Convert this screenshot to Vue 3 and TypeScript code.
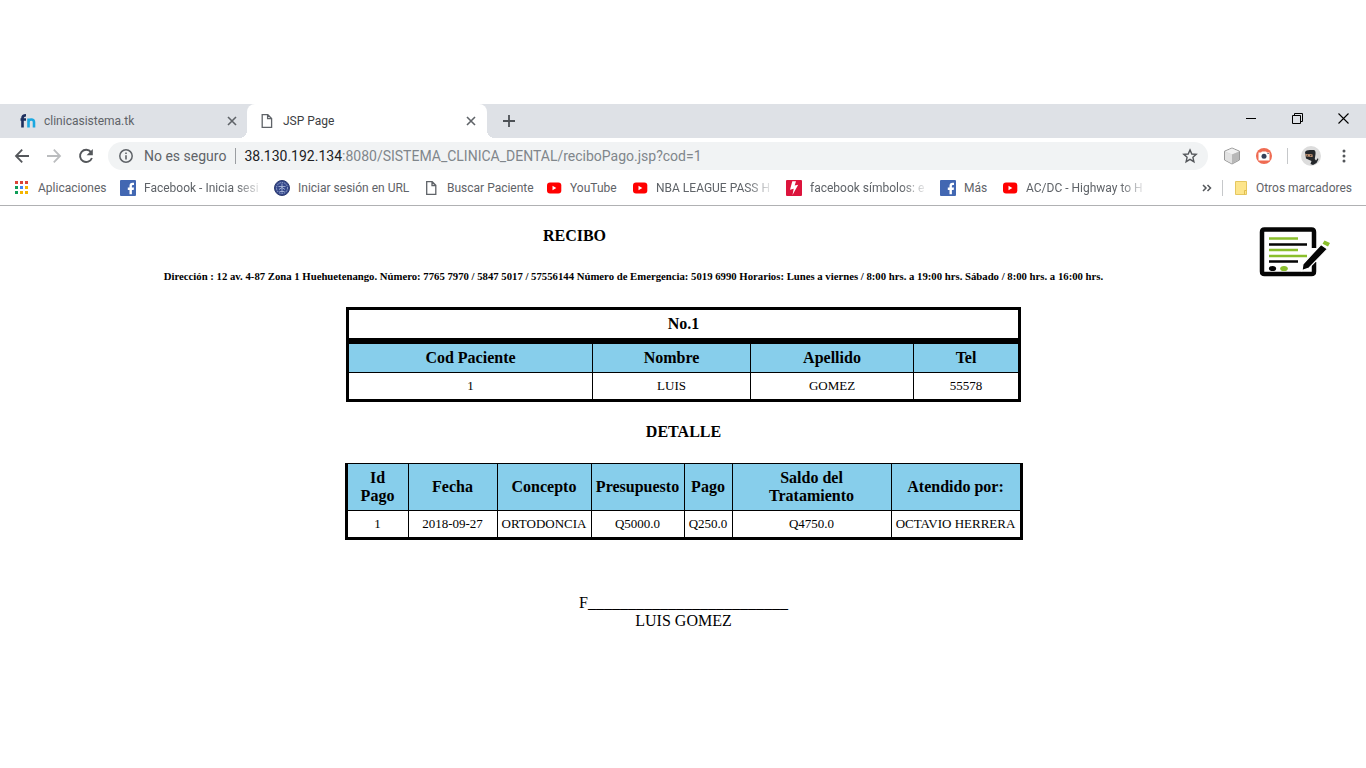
<script setup lang="ts">
interface Bookmark {
  label: string
  icon: 'apps' | 'facebook' | 'seal' | 'page' | 'youtube' | 'bolt'
  fade?: boolean
}

const bookmarks: Bookmark[] = [
  { label: 'Aplicaciones', icon: 'apps' },
  { label: 'Facebook - Inicia sesi', icon: 'facebook', fade: true },
  { label: 'Iniciar sesión en URL', icon: 'seal' },
  { label: 'Buscar Paciente', icon: 'page' },
  { label: 'YouTube', icon: 'youtube' },
  { label: 'NBA LEAGUE PASS H', icon: 'youtube', fade: true },
  { label: 'facebook símbolos: e', icon: 'bolt', fade: true },
  { label: 'Más', icon: 'facebook' },
  { label: 'AC/DC - Highway to H', icon: 'youtube', fade: true },
]

const appColors: string[] = [
  '#db4437', '#db4437', '#db4437',
  '#0f9d58', '#4285f4', '#f4b400',
  '#0f9d58', '#f4b400', '#f4b400',
]

const patientHeads: string[] = ['Cod Paciente', 'Nombre', 'Apellido', 'Tel']
const patient: string[] = ['1', 'LUIS', 'GOMEZ', '55578']

const detailHeads: string[] = ['Id Pago', 'Fecha', 'Concepto', 'Presupuesto', 'Pago', 'Saldo del Tratamiento', 'Atendido por:']
const detail: string[] = ['1', '2018-09-27', 'ORTODONCIA', 'Q5000.0', 'Q250.0', 'Q4750.0', 'OCTAVIO HERRERA']
</script>

<template>
  <div class="screen">
    <header class="browser">
      <div class="tabstrip">
        <div class="tab">
          <svg class="tab-icon" width="16" height="16" viewBox="0 0 16 16" fill="none">
            <path d="M2.500 14.500V5Q2.500 2.200 6 2.200M.5 6.500H6" stroke="#1d2f5e" stroke-width="2.600" />
            <path d="M8.500 14.500V5.500M8.500 9Q8.700 6.500 11.200 6.500Q14 6.500 14 9V14.500" stroke="#1ba8e0" stroke-width="2.600" />
          </svg>
          <span class="tab-title">clinicasistema.tk</span>
          <button class="tab-close" aria-label="Cerrar clinicasistema.tk">
            <svg width="10" height="10" viewBox="0 0 10 10"><path d="M1 1L9 9M9 1L1 9" stroke="#5f6368" stroke-width="1.600" /></svg>
          </button>
        </div>
        <div class="tab active">
          <svg class="tab-icon" width="16" height="16" viewBox="0 0 16 16" fill="none" stroke="#5f6368" stroke-width="1.300">
            <path d="M3.200 1.700H8.800L12.600 5.500V14.300H3.200ZM8.600 1.700V5.700H12.600" />
          </svg>
          <span class="tab-title">JSP Page</span>
          <button class="tab-close" aria-label="Cerrar JSP Page">
            <svg width="10" height="10" viewBox="0 0 10 10"><path d="M1 1L9 9M9 1L1 9" stroke="#5f6368" stroke-width="1.600" /></svg>
          </button>
        </div>
        <button class="new-tab" aria-label="Nueva pestaña">
          <svg width="12" height="12" viewBox="0 0 12 12"><path d="M6 0V12M0 6H12" stroke="#4d5156" stroke-width="1.800" /></svg>
        </button>
        <div class="window-controls">
          <button aria-label="Minimizar">
            <svg width="11" height="11" viewBox="0 0 11 11"><path d="M0 5.500H10" stroke="#000" /></svg>
          </button>
          <button aria-label="Restaurar">
            <svg width="11" height="11" viewBox="0 0 11 11" fill="none" stroke="#000"><path d="M.5 2.500H8.500V10.500H.5ZM2.500 2.500V.5H10.500V8.500H8.500" /></svg>
          </button>
          <button aria-label="Cerrar">
            <svg width="11" height="11" viewBox="0 0 11 11"><path d="M.5.5L10.500 10.500M10.500.5L.5 10.500" stroke="#000" stroke-width="1.100" /></svg>
          </button>
        </div>
      </div>

      <div class="toolbar">
        <button class="nav" aria-label="Atrás">
          <svg width="16" height="16" viewBox="0 0 16 16" fill="none" stroke="#54575b" stroke-width="1.800"><path d="M15 8H2M8.200 1.700L2 8L8.200 14.300" /></svg>
        </button>
        <button class="nav" aria-label="Adelante">
          <svg width="16" height="16" viewBox="0 0 16 16" fill="none" stroke="#bbbdbf" stroke-width="1.800"><path d="M1 8H14M7.800 1.700L14 8L7.800 14.300" /></svg>
        </button>
        <button class="nav" aria-label="Recargar">
          <svg width="16" height="16" viewBox="0 0 16 16"><path d="M13 4.200A6.100 6.100 0 1 0 13.900 10" fill="none" stroke="#54575b" stroke-width="1.900" /><path d="M14.800 1V7.200H8.600Z" fill="#54575b" /></svg>
        </button>
        <div class="omnibox">
          <svg width="16" height="16" viewBox="0 0 16 16"><circle cx="8" cy="8" r="6.200" fill="none" stroke="#5f6368" stroke-width="1.500" /><path d="M8 7.200V11.500M8 4.500V6" stroke="#5f6368" stroke-width="1.600" /></svg>
          <span class="security">No es seguro</span>
          <span class="url"><b>38.130.192.134</b>:8080/SISTEMA_CLINICA_DENTAL/reciboPago.jsp?cod=1</span>
          <button class="star" aria-label="Añadir a marcadores">
            <svg width="16" height="16" viewBox="0 0 16 16"><path d="M8 1.900L9.800 6L14.200 6.400L10.900 9.300L11.900 13.700L8 11.400L4.100 13.700L5.100 9.300L1.800 6.400L6.200 6Z" fill="none" stroke="#54575b" stroke-width="1.400" /></svg>
          </button>
        </div>
        <div class="extensions">
          <button aria-label="Extensión cubo">
            <svg width="18" height="18" viewBox="0 0 18 18"><path d="M9 1L16.500 4.200V13L9 17L1.500 13V4.200Z" fill="#cfcfcf" stroke="#9a9a9a" /><path d="M9 1.600L15.800 4.500L9 7.500L2.200 4.500Z" fill="#f1f1f1" /><path d="M9 7.500L16 4.700V12.700L9 16.400Z" fill="#b8b8b8" /><path d="M9 7.500V16.400L2 12.700V4.700Z" fill="#e2e2e2" /></svg>
          </button>
          <button aria-label="Captura">
            <svg width="16" height="16" viewBox="0 0 16 16"><circle cx="8" cy="8" r="8" fill="#ef6b52" /><path d="M2.500 4.500H5L6 3.500H10L11 4.500H13.500V12.500H2.500Z" fill="#fff" /><circle cx="8" cy="8.300" r="2.500" fill="#34405a" /><path d="M11.500 5.500H12.700" stroke="#34405a" /></svg>
          </button>
          <i class="divider"></i>
          <button aria-label="Perfil">
            <svg width="20" height="20" viewBox="0 0 20 20"><circle cx="10" cy="10" r="10" fill="#dcdcdc" /><path d="M4 6Q5 4 9 4H13Q14.800 4.500 14.500 8L13.800 13L15 14.500L17 12L17.300 13.500L15.500 17L12 19L9.500 18L10.500 15L5 12.500Z" fill="#24272b" /><path d="M4.500 8L11.500 8.600V11L4.700 10.300Z" fill="#e4ab83" /><path d="M5.500 9.200H7.200M8.800 9.700H10.500" stroke="#222" /></svg>
          </button>
          <button aria-label="Menú">
            <svg width="16" height="16" viewBox="0 0 16 16" fill="#54575b"><circle cx="8" cy="3" r="1.500" /><circle cx="8" cy="8" r="1.500" /><circle cx="8" cy="13" r="1.500" /></svg>
          </button>
        </div>
      </div>

      <nav class="bookmarks" aria-label="Marcadores">
        <div class="bookmark-list">
          <a v-for="(item, i) in bookmarks" :key="i" href="#" class="bookmark">
            <svg v-if="item.icon === 'apps'" width="16" height="16" viewBox="0 0 16 16">
              <rect v-for="(color, n) in appColors" :key="n" :x="1 + (n % 3) * 5" :y="1 + Math.floor(n / 3) * 5" width="3" height="3" :fill="color" />
            </svg>
            <svg v-else-if="item.icon === 'facebook'" width="16" height="16" viewBox="0 0 16 16">
              <rect width="16" height="16" rx="1" fill="#4267b2" />
              <path d="M9.500 14.300V9.900H7.800V7.500H9.500V5.700Q9.500 2.800 12.500 2.800H14V5H12.900Q11.900 5 11.900 6V7.500H14L13.700 9.900H11.900V14.300Z" fill="#fff" />
            </svg>
            <svg v-else-if="item.icon === 'seal'" width="16" height="16" viewBox="0 0 16 16" fill="none" stroke="#b4c1e0">
              <circle cx="8" cy="8" r="7.500" fill="#35488a" stroke="#2c3a6e" />
              <circle cx="8" cy="8" r="5.500" stroke-width=".8" stroke-dasharray="1.500 1" />
              <path d="M4.500 6.500H11.500M8 3.500V12.500M5 9.500L8 7.500L11 9.500M5.500 11.500H10.500" stroke-width=".8" />
            </svg>
            <svg v-else-if="item.icon === 'page'" width="16" height="16" viewBox="0 0 16 16" fill="none" stroke="#5f6368" stroke-width="1.300">
              <path d="M3.700 1.700H9.200L12.800 5.300V14.300H3.700ZM9 1.700V5.500H12.800" />
            </svg>
            <svg v-else-if="item.icon === 'youtube'" width="16" height="16" viewBox="0 0 16 16">
              <rect x="1" y="2.500" width="14.300" height="11" rx="3" fill="#f00" />
              <path d="M6.500 5.800L10.300 8L6.500 10.200Z" fill="#fff" />
            </svg>
            <svg v-else width="16" height="16" viewBox="0 0 16 16">
              <rect width="16" height="16" rx="1" fill="#dc143c" />
              <path d="M6.300 1.200H10L8.700 5.500L12.200 4.800L6.500 15L7.700 8.700L4 9.700Z" fill="#fff" />
            </svg>
            <span :class="{ fade: item.fade }">{{ item.label }}</span>
          </a>
        </div>
        <button class="more" aria-label="Más marcadores">
          <svg width="10" height="10" viewBox="0 0 10 10" fill="none" stroke="#54575b" stroke-width="1.500"><path d="M1 2L4 5L1 8M5.500 2L8.500 5L5.500 8" /></svg>
        </button>
        <i class="divider"></i>
        <a href="#" class="bookmark other">
          <svg width="14" height="14" viewBox="0 0 14 14"><path d="M1.500.5H12.500V13.500H1.500Z" fill="#fde58b" stroke="#e5c75f" /><path d="M10.500 13.500V9.500H12.500" fill="none" stroke="#e0bd4e" /></svg>
          <span>Otros marcadores</span>
        </a>
      </nav>
    </header>

    <main class="page">
      <div class="heading">
        <div class="heading-text">
          <h3 class="title">RECIBO</h3>
          <h6 class="address">Dirección : 12 av. 4-87 Zona 1 Huehuetenango. Número: 7765 7970 / 5847 5017 / 57556144 Número de Emergencia: 5019 6990 Horarios: Lunes a viernes / 8:00 hrs. a 19:00 hrs. Sábado / 8:00 hrs. a 16:00 hrs.</h6>
        </div>
        <svg class="logo" width="74" height="52" viewBox="0 0 74 52">
          <path d="M56 22V6Q56 3.500 53.500 3.500H6.500Q4 3.500 4 6V45.500Q4 48 6.500 48H53.500Q56 48 56 45.500V36" fill="none" stroke="#050505" stroke-width="4.500" />
          <path d="M11 12.500H40M11 24H40M11 30H49" stroke="#8abf2c" stroke-width="2.500" />
          <path d="M11 18.500H49M11 35.500H40" stroke="#050505" stroke-width="2.500" />
          <ellipse cx="14.500" cy="42.500" rx="3.600" ry="2.600" fill="#050505" />
          <ellipse cx="26" cy="42.500" rx="3.800" ry="2.600" fill="#8abf2c" />
          <path d="M63 18.500L69.500 23L51 42L44 44.500L45 38Z" fill="#050505" stroke="#fff" stroke-width="1.200" />
          <path d="M66.500 14.500L72 17L70 20.500L64.500 17.800Z" fill="#8abf2c" />
        </svg>
      </div>

      <table class="number">
        <tbody><tr><th>No.1</th></tr></tbody>
      </table>
      <table class="patient">
        <colgroup><col class="p1"><col class="p2"><col class="p3"><col class="p4"></colgroup>
        <thead><tr><th v-for="head in patientHeads" :key="head">{{ head }}</th></tr></thead>
        <tbody><tr><td v-for="cell in patient" :key="cell">{{ cell }}</td></tr></tbody>
      </table>

      <h3 class="subtitle">DETALLE</h3>

      <table class="detail">
        <colgroup><col class="d1"><col class="d2"><col class="d3"><col class="d4"><col class="d5"><col class="d6"><col class="d7"></colgroup>
        <thead><tr><th v-for="head in detailHeads" :key="head">{{ head }}</th></tr></thead>
        <tbody><tr><td v-for="cell in detail" :key="cell">{{ cell }}</td></tr></tbody>
      </table>

      <p class="signature">F_________________________<br>LUIS GOMEZ</p>
    </main>
  </div>
</template>

<style>
body {
  margin: 0;
  background: #fff;
}
</style>

<style scoped>
.screen {
  padding-top: 104px;
  color: #000;
  font-family: "Liberation Serif", "Times New Roman", serif;
  font-size: 16px;
}
button {
  display: flex;
  align-items: center;
  justify-content: center;
  padding: 0;
  border: 0;
  background: none;
}
svg {
  flex: none;
}
.browser {
  border-bottom: 1px solid #b0b1b3;
  color: #5f6368;
  font-family: Roboto, "Noto Sans", sans-serif;
  font-size: 12px;
}
.tabstrip {
  display: flex;
  height: 34px;
  background: #dee1e6;
}
.tab {
  display: flex;
  box-sizing: border-box;
  align-items: center;
  width: 247px;
  padding: 0 10px 0 20px;
}
.tab.active {
  position: relative;
  width: 240px;
  padding: 0 11px 0 12px;
  border-radius: 8px 8px 0 0;
  background: #fff;
  color: #3c4043;
}
.tab.active::before,
.tab.active::after {
  position: absolute;
  bottom: 0;
  width: 8px;
  height: 8px;
  content: "";
}
.tab.active::before {
  right: 100%;
  background: radial-gradient(circle at 0 0, transparent 8px, #fff 8px);
}
.tab.active::after {
  left: 100%;
  background: radial-gradient(circle at 100% 0, transparent 8px, #fff 8px);
}
.tab-title {
  flex: 1;
  margin-left: 8px;
}
.tab-close {
  width: 10px;
  height: 16px;
}
.new-tab {
  width: 28px;
  margin-left: 8px;
}
.window-controls {
  display: flex;
  height: 28px;
  margin-left: auto;
}
.window-controls button {
  width: 46px;
}
.toolbar {
  display: flex;
  align-items: center;
  height: 36px;
  padding: 0 14px;
}
.nav {
  width: 16px;
  height: 28px;
  margin-right: 16px;
}
.omnibox {
  display: flex;
  flex: 1;
  box-sizing: border-box;
  align-items: center;
  height: 28px;
  margin-left: -2px;
  padding: 0 10px;
  border-radius: 14px;
  background: #f1f3f4;
  font-size: 14px;
}
.security {
  margin-left: 10px;
  padding-right: 9px;
  border-right: 1px solid #9a9da1;
  line-height: 16px;
  white-space: nowrap;
}
.url {
  flex: 1;
  margin-left: 8px;
  color: #80868b;
  white-space: nowrap;
}
.url b {
  color: #202124;
  font-weight: 400;
}
.extensions {
  display: flex;
  align-items: center;
  margin-left: 15px;
}
.extensions button {
  margin-right: 15px;
}
.extensions button:last-child {
  margin-right: 0;
}
.extensions .divider {
  margin-right: 13px;
}
.divider {
  width: 1px;
  height: 16px;
  background: #c6c8ca;
}
.bookmarks {
  display: flex;
  align-items: center;
  height: 28px;
  padding: 0 14px 3px;
}
.bookmark-list {
  display: grid;
  flex: 1;
  grid-template-columns: 106px 154px 149px 123px 86px 154px 154px 62px 136px;
}
.bookmark {
  display: flex;
  align-items: center;
  color: #5f6368;
  line-height: 16px;
  text-decoration: none;
  white-space: nowrap;
}
.bookmark span {
  margin-left: 8px;
}
.fade {
  mask-image: linear-gradient(to right, #000 80%, transparent 104%);
}
.more {
  margin-right: 10px;
}
.other {
  margin-left: 11px;
}
.heading {
  display: flex;
  align-items: flex-start;
}
.heading-text {
  flex: 1;
  padding-top: 20px;
  text-align: center;
}
.title {
  margin: 0;
  padding-right: 118px;
  font-size: 16px;
  line-height: 20px;
}
.address {
  margin: 24px 0 0;
  line-height: 12px;
  white-space: nowrap;
}
.logo {
  margin: 20px 34px 0 -8px;
}
.page {
  padding-left: 1px;
}
table {
  box-sizing: border-box;
  width: 100%;
  max-width: 675px;
  margin: 0 auto;
  border: 3px solid #000;
  border-spacing: 0;
  table-layout: fixed;
  text-align: center;
}
th,
td {
  box-sizing: border-box;
  height: 28px;
  padding: 0 2px;
  border-right: 1px solid #000;
}
th {
  font-size: 16px;
  line-height: 18px;
}
td {
  height: 26px;
  font-size: 13px;
}
tr > :last-child {
  border-right: 0;
}
thead th {
  height: 29px;
  border-bottom: 1px solid #000;
  background: #87ceeb;
}
.number {
  margin-top: 25px;
}
.p1 { width: 244px; }
.p2 { width: 158px; }
.p3 { width: 163px; }
.subtitle {
  margin: 20px 0 21px;
  font-size: 16px;
  line-height: 20px;
  text-align: center;
}
.detail {
  max-width: 678px;
  border-top-width: 1px;
}
.detail th {
  height: 47px;
  padding: 0 4px;
}
.d1 { width: 61px; }
.d2 { width: 89px; }
.d3 { width: 94px; }
.d4 { width: 93px; }
.d5 { width: 48px; }
.d6 { width: 159px; }
.signature {
  margin: 54px 0 0;
  line-height: 18px;
  text-align: center;
}
</style>
